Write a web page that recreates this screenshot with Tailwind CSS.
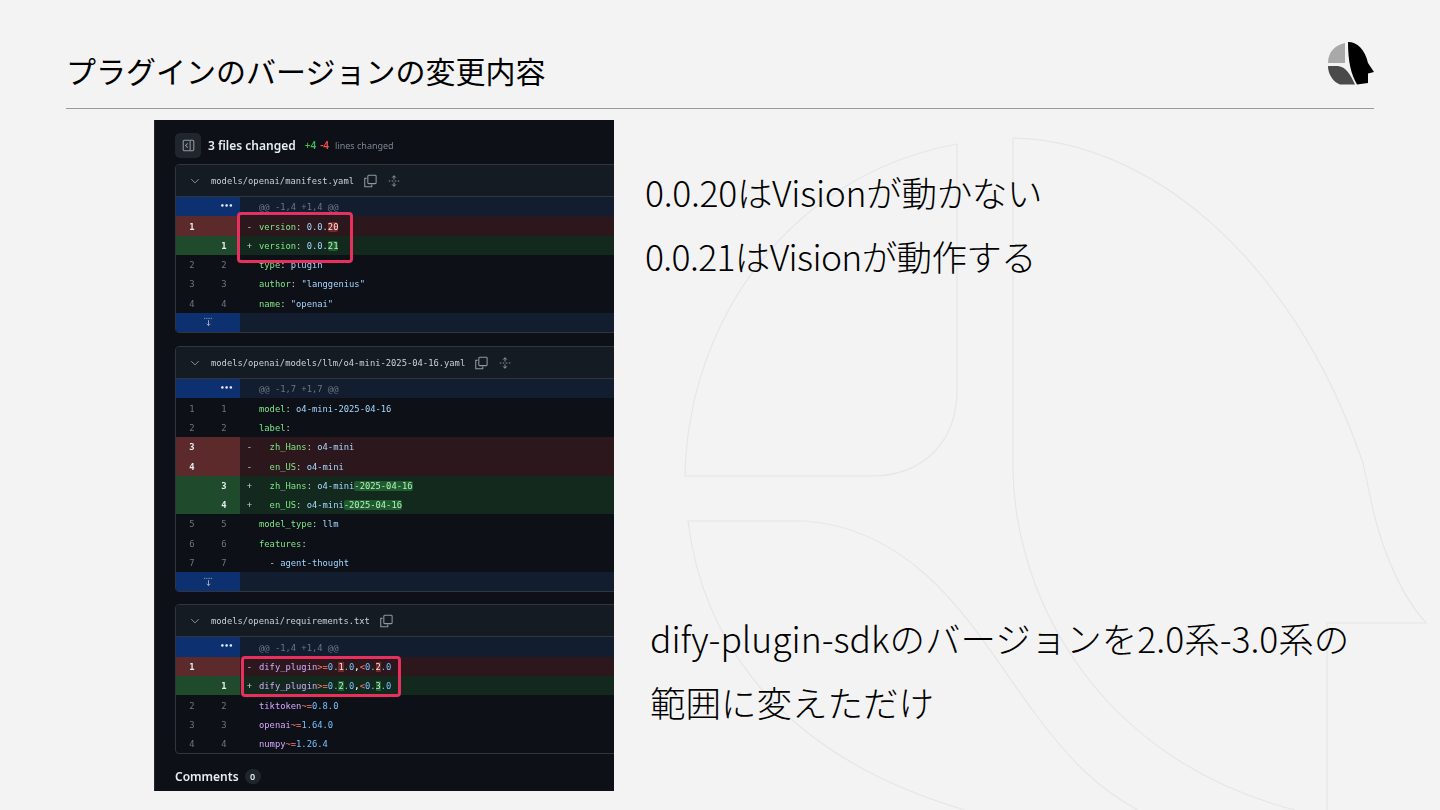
<!DOCTYPE html>
<html lang="ja">
<head>
  <meta charset="UTF-8">
  <meta name="viewport" content="width=device-width, initial-scale=1.0">
  <title>プラグインのバージョンの変更内容</title>
  <script src="https://cdn.jsdelivr.net/npm/@tailwindcss/browser@4"></script>
</head>
<body class="bg-[#f3f3f3] font-['Noto_Sans_CJK_JP','Noto_Sans',sans-serif]">
  <div class="relative h-[810px] w-[1440px] overflow-hidden bg-[#f3f3f3] text-black">

    <!-- Watermark logo -->
    <svg class="absolute inset-0" width="1440" height="810" viewBox="0 0 1440 810" fill="none" stroke="#e6e6e6" stroke-width="1.2">
      <path d="M957 144V390C957 440 925 476 871 476H685C688 320 790 175 957 144Z"/>
      <path d="M1013 138C1143 140 1290 250 1363 463L1373 510C1385 560 1405 600 1426 623H1327V810M1295 810C1100 760 1015 600 1013 470V138"/>
      <path d="M965 810C760 750 700 620 688 521H805C930 530 985 650 1040 720C1070 760 1100 790 1138 810"/>
    </svg>

    <!-- Header -->
    <header class="relative mx-[66px] flex h-[109px] justify-between border-b-[1.5px] border-[#9a9a9a]">
      <h1 class="pt-[51px] text-[30px] leading-[38px] font-normal">プラグインのバージョンの変更内容</h1>
      <svg class="mt-[42px]" width="46" height="44" viewBox="1328 42 46 44">
        <path fill="#a9a9a9" d="M1345 43V63H1328C1328 52 1335 45 1345 43Z"/>
        <path fill="#4a4a4a" d="M1328 66H1338C1346 67 1350 74 1355 84.500H1340C1333 82 1328 74 1328 66Z"/>
        <path fill="#000000" d="M1348 42C1358 42 1365 50 1368 63L1374 72L1368 73.500V83L1357 84.500C1351 74 1348 62 1348 42Z"/>
      </svg>
    </header>

    <main class="relative flex">
      <!-- GitHub diff screenshot -->
      <section class="relative mt-[11px] ml-[154px] h-[671px] w-[460px] shrink-0 overflow-hidden border-l border-[#21262d] bg-[#0d1117] pl-[20px] font-['DejaVu_Sans_Mono',monospace] text-[8.8px] leading-[17px] text-[#c9d1d9] blur-[0.3px]">
        <div class="flex h-[44px] items-center pt-[6px] font-['Noto_Sans',sans-serif]">
          <span class="flex h-[25px] w-[26px] items-center justify-center rounded-[5px] bg-[#21262d]">
            <svg width="13" height="13" viewBox="0 0 16 16" fill="none" stroke="#9198a1" stroke-width="1.300"><rect x="1.500" y="1.500" width="13" height="13" rx="1.500"/><path d="M10 2V14M7 5.500L4.500 8L7 10.500"/></svg>
          </span>
          <span class="ml-[7px] text-[12px] font-semibold text-[#e6edf3]">3 files changed</span>
          <span class="ml-[9px] text-[10px] font-semibold text-[#3fb950]">+4</span>
          <span class="ml-[4px] text-[10px] font-semibold text-[#f85149]">-4</span>
          <span class="ml-[6px] text-[9px] text-[#7d8590]">lines changed</span>
        </div>

        <!-- manifest.yaml -->
        <div class="w-[470px] overflow-hidden rounded-[4px] border border-[#30363d]">
          <div class="flex h-[32px] items-center border-b border-[#30363d] bg-[#151b23] pt-[1px] pl-[14px]">
            <svg width="10" height="10" viewBox="0 0 16 16" fill="none" stroke="#9198a1" stroke-width="1.500"><path d="M2 5L8 11L14 5"/></svg>
            <span class="ml-[11px]">models/openai/manifest.yaml</span>
            <svg class="ml-[9px]" width="14" height="14" viewBox="0 0 16 16" fill="none" stroke="#9198a1" stroke-width="1.200"><path d="M4 5H2V14.500H10V12"/><rect x="5.500" y="1.500" width="9.500" height="9.500" rx="1"/></svg>
            <svg class="ml-[11px]" width="12" height="14" viewBox="0 0 16 16" fill="none" stroke="#9198a1" stroke-width="1.300"><path d="M8 1V6M5.500 3.500L8 1L10.500 3.500M8 15V10M5.500 12.500L8 15L10.500 12.500M1 8H3M5 8H7M9 8H11M13 8H15"/></svg>
          </div>
          <div class="flex h-[19.3px] items-end bg-[#121d2f] text-[#6e7681]"><span class="flex h-full w-[64px] items-center justify-end bg-[#0d3170] pr-[7px] text-[7px] font-bold text-[#e6edf3]">•••</span><span class="pl-[19px]">@@ -1,4 +1,4 @@</span></div>
          <div class="flex h-[19.3px] items-end bg-[#2c181c]"><span class="flex h-full w-[64px] items-end bg-[#5c2a2a] font-bold text-[#e6edf3]"><span class="w-[32px] text-center">1</span></span><span class="w-[19px] text-center">-</span><span><span class="text-[#7ee787]">version</span>: <span class="text-[#a5d6ff]">0.0.</span><span class="rounded-[2px] bg-[#6e2b2b] text-[#ffdcd7]">20</span></span></div>
          <div class="flex h-[19.3px] items-end bg-[#13291d]"><span class="flex h-full w-[64px] items-end justify-end bg-[#1f4a2c] font-bold text-[#e6edf3]"><span class="w-[32px] text-center">1</span></span><span class="w-[19px] text-center">+</span><span><span class="text-[#7ee787]">version</span>: <span class="text-[#a5d6ff]">0.0.</span><span class="rounded-[2px] bg-[#1f5a30] text-[#aff5b4]">21</span></span></div>
          <div class="flex h-[19.3px] items-end"><span class="flex w-[64px] text-[#6e7681]"><span class="w-[32px] text-center">2</span><span class="w-[32px] text-center">2</span></span><span class="w-[19px]"></span><span><span class="text-[#7ee787]">type</span>: <span class="text-[#a5d6ff]">plugin</span></span></div>
          <div class="flex h-[19.3px] items-end"><span class="flex w-[64px] text-[#6e7681]"><span class="w-[32px] text-center">3</span><span class="w-[32px] text-center">3</span></span><span class="w-[19px]"></span><span><span class="text-[#7ee787]">author</span>: <span class="text-[#a5d6ff]">"langgenius"</span></span></div>
          <div class="flex h-[19.3px] items-end"><span class="flex w-[64px] text-[#6e7681]"><span class="w-[32px] text-center">4</span><span class="w-[32px] text-center">4</span></span><span class="w-[19px]"></span><span><span class="text-[#7ee787]">name</span>: <span class="text-[#a5d6ff]">"openai"</span></span></div>
          <div class="flex h-[19.3px] bg-[#121d2f]"><span class="flex h-full w-[64px] items-center justify-center bg-[#0d3170]"><svg width="9" height="10" viewBox="0 0 10 11" fill="none" stroke="#aab2bb"><path d="M0 1.500H10" stroke-dasharray="1 1"/><path d="M5 3.500V9.500M3 7.500L5 9.500L7 7.500"/></svg></span></div>
        </div>

        <!-- o4-mini-2025-04-16.yaml -->
        <div class="mt-[13px] w-[470px] overflow-hidden rounded-[4px] border border-[#30363d]">
          <div class="flex h-[32px] items-center border-b border-[#30363d] bg-[#151b23] pt-[1px] pl-[14px]">
            <svg width="10" height="10" viewBox="0 0 16 16" fill="none" stroke="#9198a1" stroke-width="1.500"><path d="M2 5L8 11L14 5"/></svg>
            <span class="ml-[11px]">models/openai/models/llm/o4-mini-2025-04-16.yaml</span>
            <svg class="ml-[9px]" width="14" height="14" viewBox="0 0 16 16" fill="none" stroke="#9198a1" stroke-width="1.200"><path d="M4 5H2V14.500H10V12"/><rect x="5.500" y="1.500" width="9.500" height="9.500" rx="1"/></svg>
            <svg class="ml-[11px]" width="12" height="14" viewBox="0 0 16 16" fill="none" stroke="#9198a1" stroke-width="1.300"><path d="M8 1V6M5.500 3.500L8 1L10.500 3.500M8 15V10M5.500 12.500L8 15L10.500 12.500M1 8H3M5 8H7M9 8H11M13 8H15"/></svg>
          </div>
          <div class="flex h-[19.3px] items-end bg-[#121d2f] text-[#6e7681]"><span class="flex h-full w-[64px] items-center justify-end bg-[#0d3170] pr-[7px] text-[7px] font-bold text-[#e6edf3]">•••</span><span class="pl-[19px]">@@ -1,7 +1,7 @@</span></div>
          <div class="flex h-[19.3px] items-end"><span class="flex w-[64px] text-[#6e7681]"><span class="w-[32px] text-center">1</span><span class="w-[32px] text-center">1</span></span><span class="w-[19px]"></span><span><span class="text-[#7ee787]">model</span>: <span class="text-[#a5d6ff]">o4-mini-2025-04-16</span></span></div>
          <div class="flex h-[19.3px] items-end"><span class="flex w-[64px] text-[#6e7681]"><span class="w-[32px] text-center">2</span><span class="w-[32px] text-center">2</span></span><span class="w-[19px]"></span><span><span class="text-[#7ee787]">label</span>:</span></div>
          <div class="flex h-[19.3px] items-end whitespace-pre bg-[#2c181c]"><span class="flex h-full w-[64px] items-end bg-[#5c2a2a] font-bold text-[#e6edf3]"><span class="w-[32px] text-center">3</span></span><span class="w-[19px] text-center">-</span><span>  <span class="text-[#7ee787]">zh_Hans</span>: <span class="text-[#a5d6ff]">o4-mini</span></span></div>
          <div class="flex h-[19.3px] items-end whitespace-pre bg-[#2c181c]"><span class="flex h-full w-[64px] items-end bg-[#5c2a2a] font-bold text-[#e6edf3]"><span class="w-[32px] text-center">4</span></span><span class="w-[19px] text-center">-</span><span>  <span class="text-[#7ee787]">en_US</span>: <span class="text-[#a5d6ff]">o4-mini</span></span></div>
          <div class="flex h-[19.3px] items-end whitespace-pre bg-[#13291d]"><span class="flex h-full w-[64px] items-end justify-end bg-[#1f4a2c] font-bold text-[#e6edf3]"><span class="w-[32px] text-center">3</span></span><span class="w-[19px] text-center">+</span><span>  <span class="text-[#7ee787]">zh_Hans</span>: <span class="text-[#a5d6ff]">o4-mini</span><span class="rounded-[2px] bg-[#1f5a30] text-[#aff5b4]">-2025-04-16</span></span></div>
          <div class="flex h-[19.3px] items-end whitespace-pre bg-[#13291d]"><span class="flex h-full w-[64px] items-end justify-end bg-[#1f4a2c] font-bold text-[#e6edf3]"><span class="w-[32px] text-center">4</span></span><span class="w-[19px] text-center">+</span><span>  <span class="text-[#7ee787]">en_US</span>: <span class="text-[#a5d6ff]">o4-mini</span><span class="rounded-[2px] bg-[#1f5a30] text-[#aff5b4]">-2025-04-16</span></span></div>
          <div class="flex h-[19.3px] items-end"><span class="flex w-[64px] text-[#6e7681]"><span class="w-[32px] text-center">5</span><span class="w-[32px] text-center">5</span></span><span class="w-[19px]"></span><span><span class="text-[#7ee787]">model_type</span>: <span class="text-[#a5d6ff]">llm</span></span></div>
          <div class="flex h-[19.3px] items-end"><span class="flex w-[64px] text-[#6e7681]"><span class="w-[32px] text-center">6</span><span class="w-[32px] text-center">6</span></span><span class="w-[19px]"></span><span><span class="text-[#7ee787]">features</span>:</span></div>
          <div class="flex h-[19.3px] items-end whitespace-pre"><span class="flex w-[64px] text-[#6e7681]"><span class="w-[32px] text-center">7</span><span class="w-[32px] text-center">7</span></span><span class="w-[19px]"></span><span>  - <span class="text-[#a5d6ff]">agent-thought</span></span></div>
          <div class="flex h-[19.3px] bg-[#121d2f]"><span class="flex h-full w-[64px] items-center justify-center bg-[#0d3170]"><svg width="9" height="10" viewBox="0 0 10 11" fill="none" stroke="#aab2bb"><path d="M0 1.500H10" stroke-dasharray="1 1"/><path d="M5 3.500V9.500M3 7.500L5 9.500L7 7.500"/></svg></span></div>
        </div>

        <!-- requirements.txt -->
        <div class="mt-[12px] w-[470px] overflow-hidden rounded-[4px] border border-[#30363d]">
          <div class="flex h-[32px] items-center border-b border-[#30363d] bg-[#151b23] pt-[1px] pl-[14px]">
            <svg width="10" height="10" viewBox="0 0 16 16" fill="none" stroke="#9198a1" stroke-width="1.500"><path d="M2 5L8 11L14 5"/></svg>
            <span class="ml-[11px]">models/openai/requirements.txt</span>
            <svg class="ml-[9px]" width="14" height="14" viewBox="0 0 16 16" fill="none" stroke="#9198a1" stroke-width="1.200"><path d="M4 5H2V14.500H10V12"/><rect x="5.500" y="1.500" width="9.500" height="9.500" rx="1"/></svg>
          </div>
          <div class="flex h-[19.3px] items-end bg-[#121d2f] text-[#6e7681]"><span class="flex h-full w-[64px] items-center justify-end bg-[#0d3170] pr-[7px] text-[7px] font-bold text-[#e6edf3]">•••</span><span class="pl-[19px]">@@ -1,4 +1,4 @@</span></div>
          <div class="flex h-[19.3px] items-end bg-[#2c181c]"><span class="flex h-full w-[64px] items-end bg-[#5c2a2a] font-bold text-[#e6edf3]"><span class="w-[32px] text-center">1</span></span><span class="w-[19px] text-center">-</span><span><span class="text-[#d2a8ff]">dify_plugin</span><span class="text-[#ff7b72]">&gt;=</span><span class="text-[#79c0ff]">0.</span><span class="bg-[#6e2b2b] text-[#ffdcd7]">1</span><span class="text-[#79c0ff]">.0</span><span class="font-bold text-[#e6edf3]">,</span><span class="text-[#ff7b72]">&lt;</span><span class="text-[#79c0ff]">0.</span><span class="bg-[#6e2b2b] text-[#ffdcd7]">2</span><span class="text-[#79c0ff]">.0</span></span></div>
          <div class="flex h-[19.3px] items-end bg-[#13291d]"><span class="flex h-full w-[64px] items-end justify-end bg-[#1f4a2c] font-bold text-[#e6edf3]"><span class="w-[32px] text-center">1</span></span><span class="w-[19px] text-center">+</span><span><span class="text-[#d2a8ff]">dify_plugin</span><span class="text-[#ff7b72]">&gt;=</span><span class="text-[#79c0ff]">0.</span><span class="bg-[#1f5a30] text-[#aff5b4]">2</span><span class="text-[#79c0ff]">.0</span><span class="font-bold text-[#e6edf3]">,</span><span class="text-[#ff7b72]">&lt;</span><span class="text-[#79c0ff]">0.</span><span class="bg-[#1f5a30] text-[#aff5b4]">3</span><span class="text-[#79c0ff]">.0</span></span></div>
          <div class="flex h-[19.3px] items-end"><span class="flex w-[64px] text-[#6e7681]"><span class="w-[32px] text-center">2</span><span class="w-[32px] text-center">2</span></span><span class="w-[19px]"></span><span><span class="text-[#d2a8ff]">tiktoken</span><span class="text-[#ff7b72]">~=</span><span class="text-[#79c0ff]">0.8.0</span></span></div>
          <div class="flex h-[19.3px] items-end"><span class="flex w-[64px] text-[#6e7681]"><span class="w-[32px] text-center">3</span><span class="w-[32px] text-center">3</span></span><span class="w-[19px]"></span><span><span class="text-[#d2a8ff]">openai</span><span class="text-[#ff7b72]">~=</span><span class="text-[#79c0ff]">1.64.0</span></span></div>
          <div class="flex h-[19.3px] items-end"><span class="flex w-[64px] text-[#6e7681]"><span class="w-[32px] text-center">4</span><span class="w-[32px] text-center">4</span></span><span class="w-[19px]"></span><span><span class="text-[#d2a8ff]">numpy</span><span class="text-[#ff7b72]">~=</span><span class="text-[#79c0ff]">1.26.4</span></span></div>
        </div>

        <div class="mt-[14px] flex items-center font-['Noto_Sans',sans-serif]">
          <span class="text-[12px] font-semibold text-[#e6edf3]">Comments</span>
          <span class="ml-[6px] flex h-[15px] w-[16px] items-center justify-center rounded-full bg-[#21262d] text-[9px] font-semibold text-[#e6edf3]">0</span>
        </div>

        <!-- Red highlight boxes -->
        <div class="absolute top-[92px] left-[82px] h-[51px] w-[116px] rounded-[4px] border-[3px] border-[#e8305f]"></div>
        <div class="absolute top-[536px] left-[86px] h-[41px] w-[160px] rounded-[4px] border-[3px] border-[#e8305f]"></div>
      </section>

      <!-- Notes -->
      <div class="ml-[31px] flex flex-col text-[35.5px] leading-[64px] font-extralight">
        <p class="mt-[51px] tracking-[-0.3px]">0.0.20はVisionが動かない</p>
        <p class="tracking-[-0.65px]">0.0.21はVisionが動作する</p>
        <p class="mt-[318px] ml-[5px] whitespace-nowrap">dify-plugin-sdkのバージョンを2.0系-3.0系の</p>
        <p class="ml-[5px]">範囲に変えただけ</p>
      </div>
    </main>
  </div>
</body>
</html>
